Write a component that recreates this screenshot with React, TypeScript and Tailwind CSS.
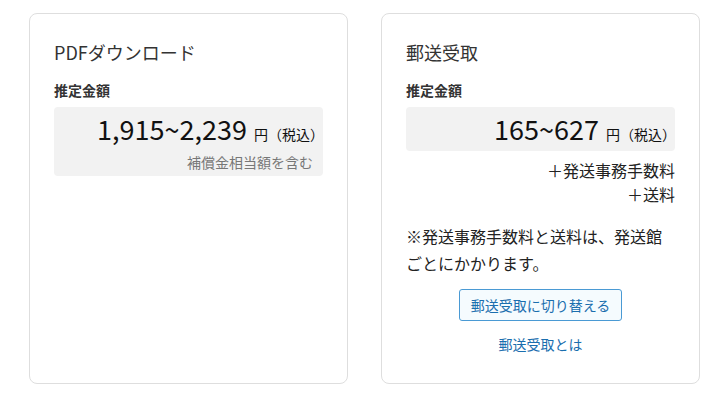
import React from "react";

const font = { fontFamily: '"Noto Sans CJK JP", "Noto Sans", sans-serif' };

function Price({ value }: { value: string }) {
  return (
    <div className="h-[36px] mr-[-11px] flex items-baseline justify-end text-[#111]">
      <span className="text-[27px] leading-[36px]">{value}</span>
      <span className="text-[14px] leading-[20px] ml-[7px]">円（税込）</span>
    </div>
  );
}

export default function App() {
  return (
    <div
      className="w-[728px] h-[398px] bg-white flex gap-[33px] pl-[29px] pt-[13px]"
      style={font}
    >
      <div className="w-[319px] h-[371px] border border-[#dedede] rounded-[8px] bg-white px-[24px] pt-[25px] flex flex-col">
        <div className="text-[18px] leading-[27px] text-[#333]">PDFダウンロード</div>
        <div className="mt-[14px] text-[14px] leading-[20px] font-bold text-[#333]">推定金額</div>
        <div className="mt-[7px] bg-[#f2f2f2] rounded-[4px] pl-[8px] pr-[10px] pt-[4px] pb-[4px] flex flex-col">
          <Price value="1,915~2,239" />
          <div className="mt-[5px] text-[14px] leading-[20px] text-[#777] text-right">補償金相当額を含む</div>
        </div>
      </div>

      <div className="w-[319px] h-[371px] border border-[#dedede] rounded-[8px] bg-white px-[24px] pt-[25px] flex flex-col">
        <div className="text-[18px] leading-[27px] text-[#333]">郵送受取</div>
        <div className="mt-[14px] text-[14px] leading-[20px] font-bold text-[#333]">推定金額</div>
        <div className="mt-[7px] bg-[#f2f2f2] rounded-[4px] pl-[8px] pr-[10px] py-[4px] flex flex-col">
          <Price value="165~627" />
        </div>
        <div className="mt-[7px] text-[16px] leading-[24px] text-[#222] text-right">
          <div>＋発送事務手数料</div>
          <div>＋送料</div>
        </div>
        <div className="mt-[17px] text-[16px] leading-[27px] text-[#222]">
          ※発送事務手数料と送料は、発送館ごとにかかります。
        </div>
        <div className="mt-[12px] flex justify-center">
          <button className="h-[32px] px-[11px] border border-[#4a9ad4] rounded-[3px] bg-[#f5fbfe] text-[14px] leading-[20px] text-[#1a6eae]">
            郵送受取に切り替える
          </button>
        </div>
        <div className="mt-[13px] text-center text-[14px] leading-[20px] text-[#1a6eae]">郵送受取とは</div>
      </div>
    </div>
  );
}
